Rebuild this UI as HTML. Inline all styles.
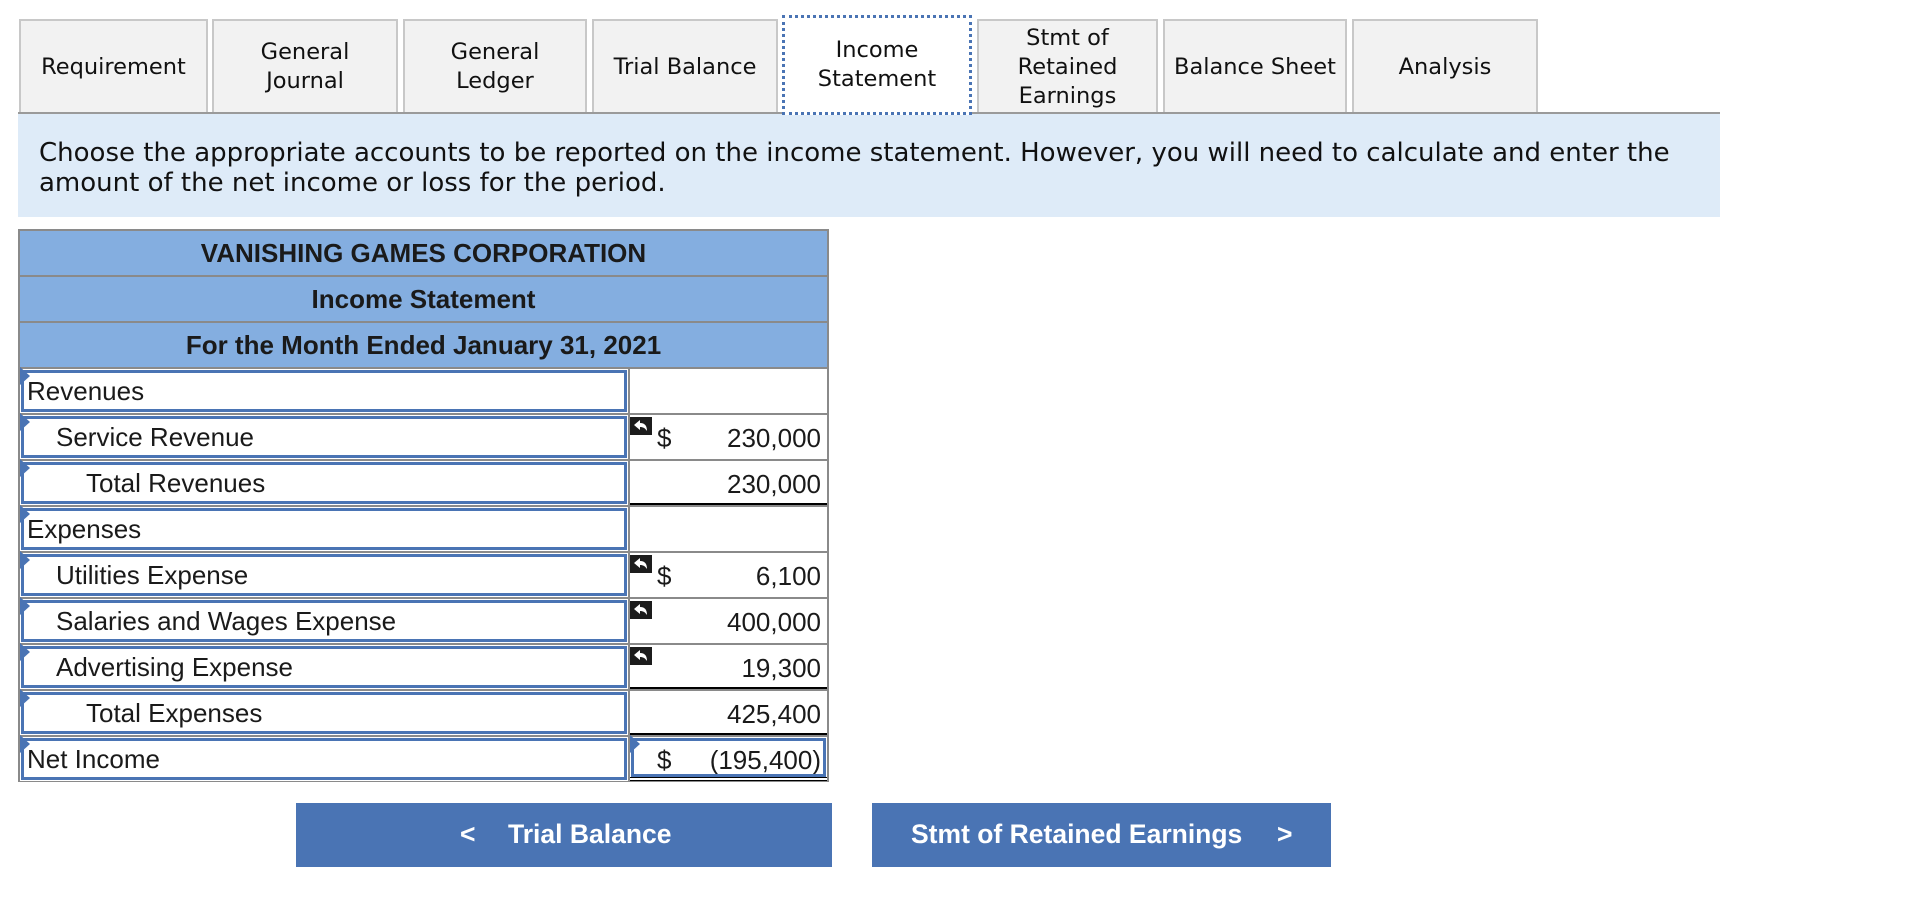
<!DOCTYPE html>
<html><head><meta charset="utf-8"><style>
*{box-sizing:border-box;margin:0;padding:0}
body{width:1910px;height:900px;background:#fff;position:relative;overflow:hidden;font-family:"Liberation Sans",Arial,sans-serif;color:#222}
.tab{position:absolute;top:19px;height:94px;background:#f2f2f2;border:2px solid #c8c8c8;border-bottom:none;display:flex;align-items:center;justify-content:center;text-align:center;font-family:"DejaVu Sans",Verdana,sans-serif;font-size:22.5px;line-height:29px;color:#111}
.tab.act{top:15px;height:100px;background:#fff;border:3px dotted #4a74b4;z-index:2}
.line{position:absolute;left:18px;top:112px;width:1702px;height:2px;background:#9a9a9a}
.info{position:absolute;left:18px;top:114px;width:1702px;height:103px;background:#deebf8;font-family:"DejaVu Sans",Verdana,sans-serif;font-size:26px;line-height:30px;padding:24px 0 0 21px;color:#111;white-space:nowrap}
.tbl{position:absolute;left:18px;top:229px;width:811px;height:553px;background:#8a8a8a}
.hd{position:absolute;left:20px;width:807px;height:44px;background:#84aee0;font-weight:bold;font-size:26px;display:flex;align-items:center;justify-content:center;color:#1a1a1a}
.lc{position:absolute;left:20px;width:608px;height:44px;background:#fff}
.lc .in{position:absolute;left:1px;top:1px;right:1px;bottom:1px;border:3px solid #4a74b4;font-size:26px;display:flex;align-items:center;color:#1a1a1a}
.tri{position:absolute;left:0;top:-2px;width:0;height:0;border-top:9px solid transparent;border-bottom:9px solid transparent;border-left:10px solid #4a74b4}
.rc{position:absolute;left:630px;width:197px;height:44px;background:#fff;font-size:26px;color:#1a1a1a}
.rc .d{position:absolute;left:27px;top:8px}
.rc .n{position:absolute;right:6px;top:8px}
.ic{position:absolute;left:0;top:2px;width:22px;height:18px;background:#1c1c1c;line-height:0}
.ic svg{display:block}
.btn{position:absolute;top:803px;height:64px;background:#4a74b4;color:#fff;font-weight:bold;font-size:26.5px}
.btn span{position:absolute;top:16px}
</style></head><body>
<div class="tab" style="left:19px;width:189px">Requirement</div>
<div class="tab" style="left:212px;width:186px">General<br>Journal</div>
<div class="tab" style="left:403px;width:184px">General<br>Ledger</div>
<div class="tab" style="left:592px;width:186px">Trial Balance</div>
<div class="tab act" style="left:782px;width:190px">Income<br>Statement</div>
<div class="tab" style="left:977px;width:181px">Stmt of<br>Retained<br>Earnings</div>
<div class="tab" style="left:1163px;width:184px">Balance Sheet</div>
<div class="tab" style="left:1352px;width:186px">Analysis</div>
<div class="line"></div>
<div class="info">Choose the appropriate accounts to be reported on the income statement. However, you will need to calculate and enter the<br>amount of the net income or loss for the period.</div>

<div class="tbl"></div>
<div class="hd" style="top:231px">VANISHING GAMES CORPORATION</div>
<div class="hd" style="top:277px">Income Statement</div>
<div class="hd" style="top:323px">For the Month Ended January 31, 2021</div>

<div class="lc" style="top:369px"><div class="in" style="padding-left:3px">Revenues</div><div class="tri"></div></div>
<div class="rc" style="top:369px"></div>

<div class="lc" style="top:415px"><div class="in" style="padding-left:32px">Service Revenue</div><div class="tri"></div></div>
<div class="rc" style="top:415px"><div class="ic"><svg width="22" height="18" viewBox="0 0 22 18"><path d="M4 8 L10 3 L10 6 C15 6 17 9 17 14 C15 11 13 10 10 10 L10 13 Z" fill="#fff"/></svg></div><span class="d">$</span><span class="n">230,000</span></div>

<div class="lc" style="top:461px"><div class="in" style="padding-left:62px">Total Revenues</div><div class="tri"></div></div>
<div class="rc" style="top:461px;border-bottom:2px solid #000"><span class="n">230,000</span></div>

<div class="lc" style="top:507px"><div class="in" style="padding-left:3px">Expenses</div><div class="tri"></div></div>
<div class="rc" style="top:507px"></div>

<div class="lc" style="top:553px"><div class="in" style="padding-left:32px">Utilities Expense</div><div class="tri"></div></div>
<div class="rc" style="top:553px"><div class="ic"><svg width="22" height="18" viewBox="0 0 22 18"><path d="M4 8 L10 3 L10 6 C15 6 17 9 17 14 C15 11 13 10 10 10 L10 13 Z" fill="#fff"/></svg></div><span class="d">$</span><span class="n">6,100</span></div>

<div class="lc" style="top:599px"><div class="in" style="padding-left:32px">Salaries and Wages Expense</div><div class="tri"></div></div>
<div class="rc" style="top:599px"><div class="ic"><svg width="22" height="18" viewBox="0 0 22 18"><path d="M4 8 L10 3 L10 6 C15 6 17 9 17 14 C15 11 13 10 10 10 L10 13 Z" fill="#fff"/></svg></div><span class="n">400,000</span></div>

<div class="lc" style="top:645px"><div class="in" style="padding-left:32px">Advertising Expense</div><div class="tri"></div></div>
<div class="rc" style="top:645px;border-bottom:2px solid #000"><div class="ic"><svg width="22" height="18" viewBox="0 0 22 18"><path d="M4 8 L10 3 L10 6 C15 6 17 9 17 14 C15 11 13 10 10 10 L10 13 Z" fill="#fff"/></svg></div><span class="n">19,300</span></div>

<div class="lc" style="top:691px"><div class="in" style="padding-left:62px">Total Expenses</div><div class="tri"></div></div>
<div class="rc" style="top:691px;border-bottom:2px solid #000"><span class="n">425,400</span></div>

<div class="lc" style="top:737px"><div class="in" style="padding-left:3px">Net Income</div><div class="tri"></div></div>
<div class="rc" style="top:737px;border-bottom:4px double #000"><span class="d">$</span><span class="n">(195,400)</span><div style="position:absolute;left:1px;top:1px;right:1px;bottom:0;border:3px solid #4a74b4"></div><div class="tri"></div></div>

<div class="btn" style="left:296px;width:536px"><span style="left:164px">&lt;</span><span style="left:212px">Trial Balance</span></div>
<div class="btn" style="left:872px;width:459px"><span style="left:39px">Stmt of Retained Earnings</span><span style="left:405px">&gt;</span></div>
</body></html>
